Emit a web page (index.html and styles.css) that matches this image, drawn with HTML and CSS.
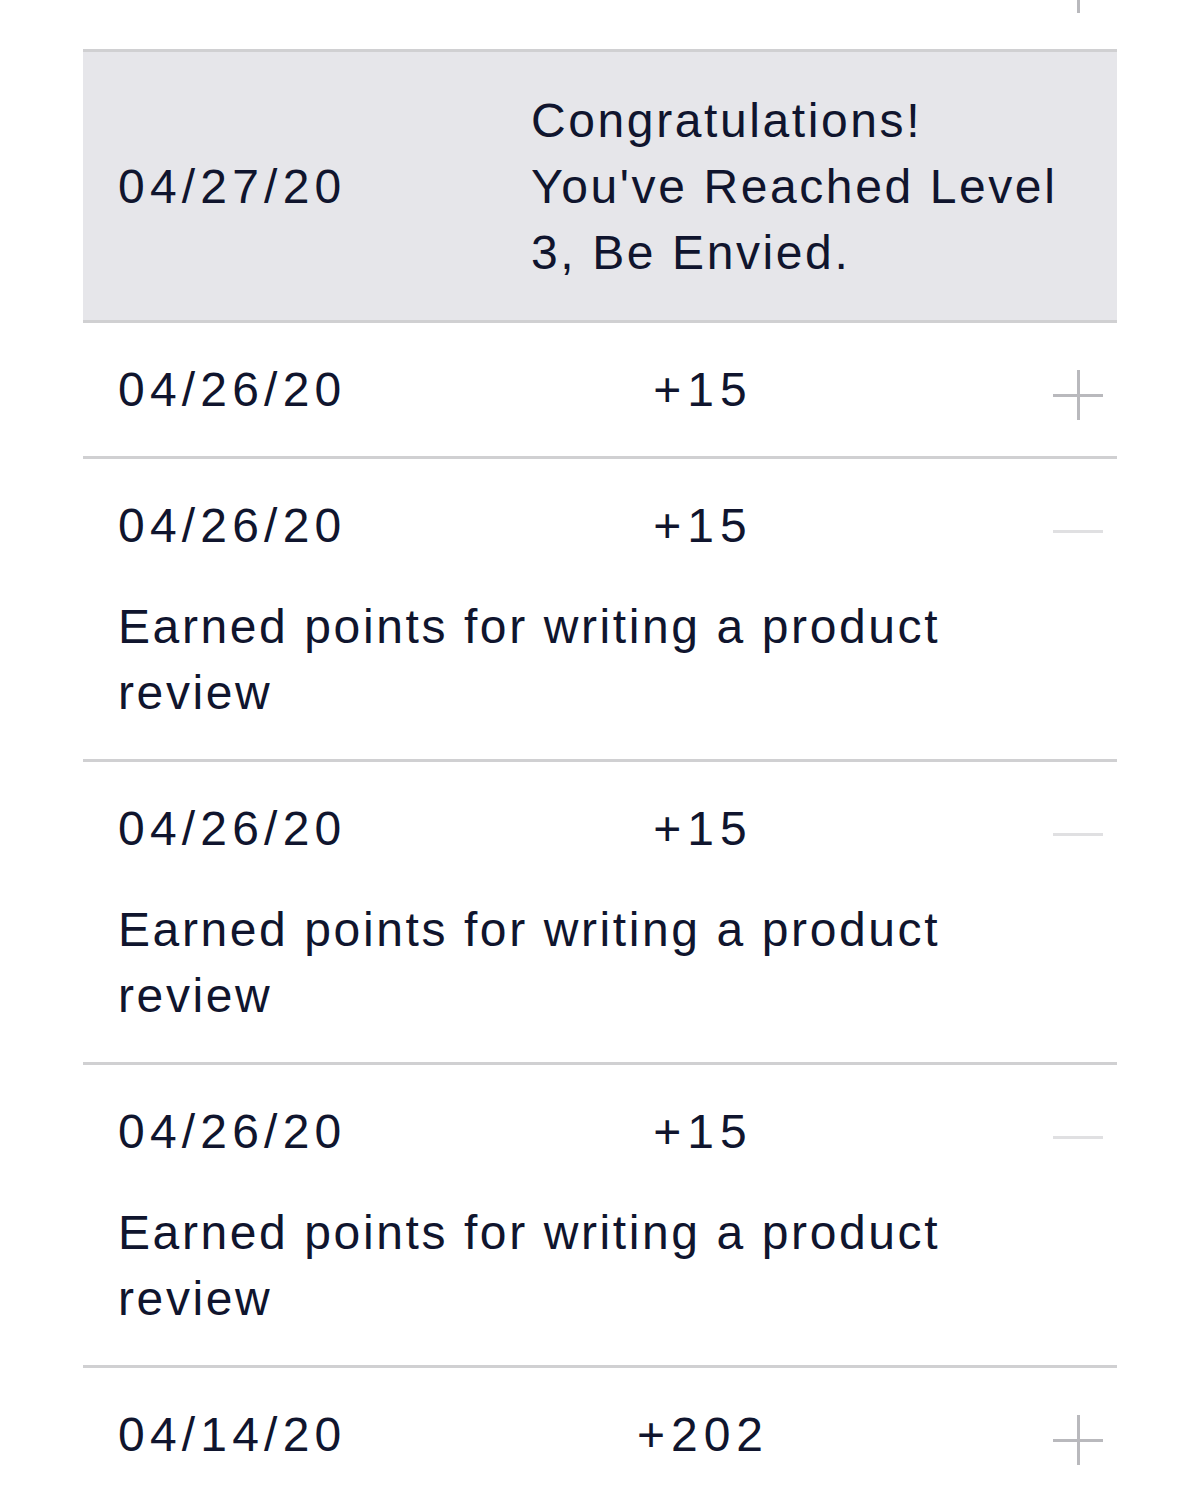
FILE: index.html
```html
<!DOCTYPE html>
<html lang="en">
<head>
<meta charset="utf-8">
<title>Points history</title>
<link rel="stylesheet" href="styles.css">
</head>
<body>
<div class="history">
  <div class="row">
    <div class="date">04/27/20</div>
    <div class="points">+15</div>
    <div class="toggle"><span class="icon plus"></span></div>
  </div>
  <div class="row row-level">
    <div class="date">04/27/20</div>
    <div class="message">Congratulations! You've Reached Level 3, Be Envied.</div>
  </div>
  <div class="row">
    <div class="date">04/26/20</div>
    <div class="points">+15</div>
    <div class="toggle"><span class="icon plus"></span></div>
  </div>
  <div class="row">
    <div class="date">04/26/20</div>
    <div class="points">+15</div>
    <div class="toggle"><span class="icon minus"></span></div>
    <div class="desc">Earned points for writing a product review</div>
  </div>
  <div class="row">
    <div class="date">04/26/20</div>
    <div class="points">+15</div>
    <div class="toggle"><span class="icon minus"></span></div>
    <div class="desc">Earned points for writing a product review</div>
  </div>
  <div class="row">
    <div class="date">04/26/20</div>
    <div class="points">+15</div>
    <div class="toggle"><span class="icon minus"></span></div>
    <div class="desc">Earned points for writing a product review</div>
  </div>
  <div class="row">
    <div class="date">04/14/20</div>
    <div class="points">+202</div>
    <div class="toggle"><span class="icon plus"></span></div>
  </div>
</div>
</body>
</html>
```
FILE: styles.css
```css
html, body {
  margin: 0;
  padding: 0;
  background: #ffffff;
  overflow: hidden;
}

body {
  font-family: "Liberation Sans", Arial, sans-serif;
  font-size: 48px;
  line-height: 66px;
  color: #10152e;
  letter-spacing: 2.6px;
}

.history {
  margin: -84px 0 0 83px;
  width: 1034px;
}

.row {
  display: grid;
  grid-template-columns: 413px 344px 1fr;
  padding: 34px 14px 33px 35px;
  border-bottom: 3px solid #d0d0d2;
}

.row-level {
  background: #e6e6ea;
  padding-top: 36px;
  padding-bottom: 34px;
}

.row-level .date {
  align-self: center;
}

.date {
  letter-spacing: 5.2px;
}

.points {
  text-align: center;
  letter-spacing: 6px;
}

.message {
  grid-column: 2 / 4;
  max-width: 545px;
}

.toggle {
  height: 66px;
  display: flex;
  justify-content: flex-end;
}

.icon {
  position: relative;
  width: 50px;
  height: 50px;
  margin-top: 13px;
}

.icon::before,
.icon::after {
  content: "";
  position: absolute;
}

.icon::before {
  left: 0;
  right: 0;
  top: 24px;
  height: 3px;
}

.icon::after {
  top: 0;
  bottom: 0;
  left: 24px;
  width: 3px;
}

.plus::before,
.plus::after {
  background: #b9b9bd;
}

.minus::before {
  background: #e0e0e2;
}

.desc {
  grid-column: 1 / 4;
  margin-top: 35px;
  max-width: 900px;
}
```
